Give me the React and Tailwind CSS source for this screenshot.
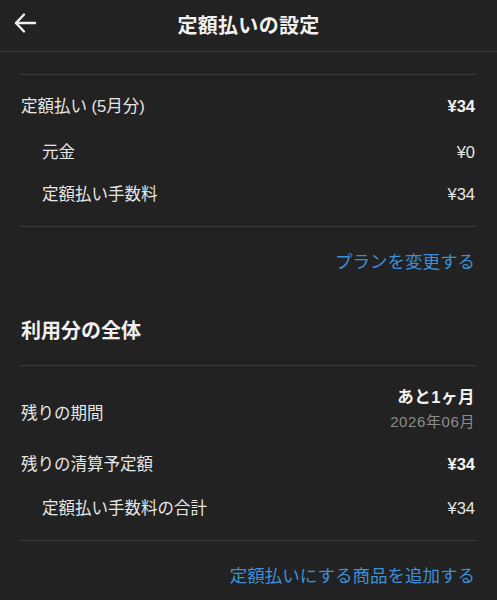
import React from 'react';

const font = { fontFamily: '"Liberation Sans", "Noto Sans CJK JP", sans-serif' };

const Divider = () => <div className="mx-[20px] h-px bg-[#3a3a3a]" />;

const Row = ({ label, value, sub, bold, className = '' }) => (
  <div className={`flex items-center justify-between pr-[22px] text-[16.5px] text-[#e6e6e6] ${sub ? 'pl-[42px]' : 'pl-[21px]'} ${className}`}>
    <span>{label}</span>
    <span className={bold ? 'font-bold text-[#f2f2f2]' : ''}>{value}</span>
  </div>
);

export default function App() {
  return (
    <div className="h-[600px] w-full overflow-hidden bg-[#222222]" style={font}>
      {/* Header */}
      <div className="relative flex h-[52px] items-center justify-center border-b border-[#3a3a3a]">
        <svg className="absolute left-[13px] top-[12px]" width="26" height="22" viewBox="0 0 26 22" fill="none" stroke="#f0f0f0" strokeWidth="2.4" strokeLinecap="round" strokeLinejoin="round">
          <path d="M3 11H22" />
          <path d="M11 2.5L3 11L11 19.5" />
        </svg>
        <h1 className="text-[20px] font-semibold tracking-[0.3px] text-[#f0f0f0]">定額払いの設定</h1>
      </div>

      <div className="h-[22px]" />
      <Divider />

      <Row label="定額払い (5月分)" value="¥34" bold className="mt-[11px] h-[40px]" />
      <Row label="元金" value="¥0" sub className="mt-[5px] h-[42px]" />
      <Row label="定額払い手数料" value="¥34" sub className="h-[42px]" />

      <div className="h-[11px]" />
      <Divider />

      <div className="flex h-[70px] items-center justify-end pr-[22px] text-[17.5px] text-[#3d8fd9]">
        プランを変更する
      </div>

      <div className="flex h-[68px] items-center pl-[21px] text-[20px] font-bold text-[#f0f0f0]">
        利用分の全体
      </div>
      <Divider />

      <div className="flex items-center justify-between pt-[19px] pb-[8px] pl-[21px] pr-[22px] text-[#e6e6e6]">
        <span className="mt-[6px] text-[16.5px]">残りの期間</span>
        <div className="flex flex-col items-end">
          <span className="flex h-[24px] items-center text-[16.5px] font-bold tracking-[0.5px] text-[#f2f2f2]">あと1ヶ月</span>
          <span className="flex h-[26px] items-center text-[15px] tracking-[0.6px] text-[#8c8c8c]">2026年06月</span>
        </div>
      </div>

      <Row label="残りの清算予定額" value="¥34" bold className="h-[42px]" />
      <Row label="定額払い手数料の合計" value="¥34" sub className="mt-[2px] h-[42px]" />

      <div className="h-[11px]" />
      <Divider />

      <div className="flex h-[70px] items-center justify-end pr-[22px] text-[17.5px] text-[#3d8fd9]">
        定額払いにする商品を追加する
      </div>
    </div>
  );
}
